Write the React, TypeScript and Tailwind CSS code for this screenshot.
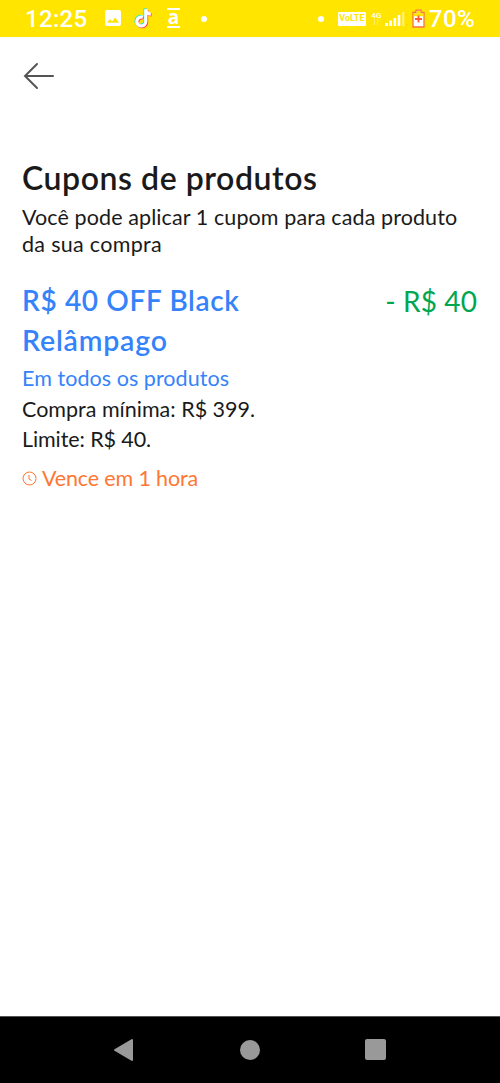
import type { ReactNode } from 'react';

function TikTokNote({ color, x, y }: { color: string; x: number; y: number }) {
  return (
    <g transform={`translate(${x} ${y})`} fill="none" stroke={color} strokeWidth="3.2">
      <path d="M8.500 8.600A4.500 4.500 0 1 0 11.400 13V.5c.3 3 2.200 4.900 5 5" />
    </g>
  );
}

function StatusBar() {
  return (
    <header className="flex h-[37px] shrink-0 items-center bg-[#ffe500] pl-[25px] pr-[25px] font-['Roboto',sans-serif] text-white">
      <span className="w-[80px] pt-[2px] text-[24px] font-medium leading-[37px] tracking-[0.3px]">12:25</span>
      <svg className="-mt-px" width="16" height="16" viewBox="0 0 16 16">
        <rect width="16" height="16" rx="2" fill="#fff" />
        <path d="M2 12.800 5 9l2 2.400L10.200 7.500 14 12.800Z" fill="#ffe500" />
      </svg>
      <svg className="-mt-[2px] ml-[12px]" width="20" height="22" viewBox="0 0 20 22">
        <TikTokNote color="#25e5e0" x={0.6} y={1} />
        <TikTokNote color="#fe4060" x={2.200} y={2.400} />
        <TikTokNote color="#fff" x={1.400} y={1.700} />
      </svg>
      <span className="-mt-px ml-[14px] flex h-[20px] w-[13px] items-center justify-center border-y-2 border-white font-['Open_Sans',sans-serif] text-[19px] font-bold leading-none">
        <span className="-mt-px">a</span>
      </span>
      <span className="ml-[21px] size-[6px] rounded-full bg-white" />
      <span className="ml-auto size-[6px] rounded-full bg-white" />
      <span className="ml-[14px] flex h-[14px] w-[28px] items-center justify-center rounded-[1px] bg-white text-[9px] font-bold text-[#ffe500]">VoLTE</span>
      <span className="ml-[5px] flex h-[14px] w-[11px] flex-col items-center">
        <span className="text-[8px] font-medium leading-[7px]">4G</span>
        <svg width="8" height="6" viewBox="0 0 8 6" fill="none" stroke="#fff" strokeOpacity="0.45" strokeWidth="0.8">
          <path d="M2.500 0v6M1 4.500 2.500 6M5.500 6V0M5.500 0 7 1.500" />
        </svg>
      </span>
      <svg className="ml-[3px]" width="20" height="14" viewBox="0 0 20 14" fill="#fff">
        <path d="M0 11h3v3H0zM4.300 8.500h2.600V14H4.300zM8.500 6h2.600v8H8.500zM12.700 3h2.600v11h-2.600z" />
        <path d="M17 0h2.400v14H17z" fillOpacity="0.4" />
      </svg>
      <svg className="ml-[7px]" width="13" height="19" viewBox="0 0 13 19">
        <path d="M1 3.500h3V1.200h5v2.300h3V18H1Z" fill="#fff" stroke="#ff7043" strokeWidth="1.300" />
        <path d="M4.700 1.900h3.600v2.300h3v3H1.700v-3h3Z" fill="#ffe500" />
        <path d="M6.500 6.500v7M3 10h7" stroke="#ff5a36" strokeWidth="1.800" />
      </svg>
      <span className="ml-[4px] pt-[2px] text-[24px] font-medium leading-[37px] tracking-[0.400px]">70%</span>
    </header>
  );
}

function Detail({ children, className = '' }: { children: ReactNode; className?: string }) {
  return <p className={`text-[21.500px] leading-[30.500px] ${className}`}>{children}</p>;
}

function NavBar() {
  return (
    <nav className="flex h-[67px] shrink-0 items-center justify-between border-t border-[#555] bg-black pb-px pl-[113px] pr-[114px]">
      <svg width="21" height="24" viewBox="0 0 21 24">
        <path d="M2 12 19 2v20Z" fill="#999" stroke="#999" strokeWidth="2" strokeLinejoin="round" />
      </svg>
      <span className="size-[20px] rounded-full bg-[#999]" />
      <span className="size-[21px] rounded-[2px] bg-[#999]" />
    </nav>
  );
}

export default function App() {
  return (
    <div className="flex h-[1083px] w-[500px] flex-col overflow-hidden bg-white font-['Lato',sans-serif] text-[#1a1a1a]">
      <StatusBar />
      <main className="flex-1 pl-[22px] pr-[23px] pt-[25px]">
        <svg className="ml-px" width="32" height="28" viewBox="0 0 32 28" fill="none" stroke="#555" strokeWidth="2" strokeLinecap="round">
          <path d="M14 2 2 14l12 12M2 14h28" />
        </svg>

        <h1 className="mt-[68px] text-[32px] font-semibold leading-[40px] tracking-[0.550px]">Cupons de produtos</h1>
        <p className="mt-[6px] text-[21.500px] leading-[27px] tracking-[0.1px] whitespace-nowrap">
          <span className="block">Você pode aplicar 1 cupom para cada produto</span>
          <span className="block tracking-[0.300px]">da sua compra</span>
        </p>

        <section className="mt-[22px]">
          <div className="flex justify-between whitespace-nowrap text-[28px] leading-[40px]">
            <h2 className="font-semibold text-[#3483fa]">
              <span className="block tracking-[0.650px]">R$ 40 OFF Black</span>
              <span className="block text-[28.500px] tracking-[0.800px]">Relâmpago</span>
            </h2>
            <span className="pt-px tracking-[0.100px] text-[#00a650]">- R$ 40</span>
          </div>
          <div className="mt-[3px]">
            <Detail className="text-[#3483fa] tracking-[0.050px]">Em todos os produtos</Detail>
            <Detail>Compra mínima: R$ 399.</Detail>
            <Detail className="tracking-[-0.100px]">Limite: R$ 40.</Detail>
          </div>
          <div className="mt-[8px] flex items-center text-[#ff7733]">
            <svg className="mr-[5px] mt-px" width="15" height="15" viewBox="0 0 15 15" fill="none" stroke="#ff7733">
              <circle cx="7.500" cy="7.500" r="6.500" />
              <path d="M7 4v4l2.500 1.500" />
            </svg>
            <Detail className="tracking-[-0.150px]">Vence em 1 hora</Detail>
          </div>
        </section>
      </main>
      <NavBar />
    </div>
  );
}
